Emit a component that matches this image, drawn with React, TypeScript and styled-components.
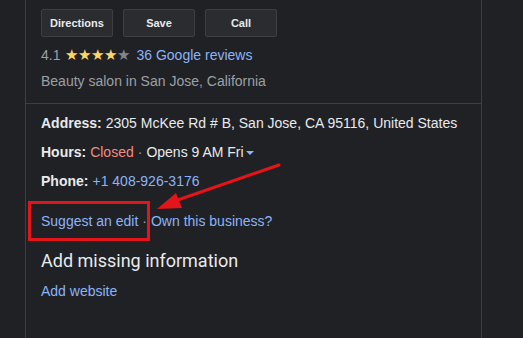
import React from "react";
import styled, { createGlobalStyle } from "styled-components";

const Global = createGlobalStyle`
  html, body { margin: 0; padding: 0; background: #202124; }
  body { width: 523px; height: 338px; overflow: hidden; font-family: "Liberation Sans", Arial, sans-serif; }
`;

const Page = styled.div`
  position: relative;
  width: 523px;
  height: 338px;
  background: #202124;
  display: flex;
`;

const Gutter = styled.div`
  width: 25px;
  flex: none;
`;

const Panel = styled.div`
  width: 455px;
  flex: none;
  border-left: 1px solid #3c4043;
  border-right: 1px solid #3c4043;
  display: flex;
  flex-direction: column;
`;

const Top = styled.div`
  padding: 9px 15px 0 15px;
  display: flex;
  flex-direction: column;
  border-bottom: 1px solid #3c4043;
  height: 94px;
`;

const Buttons = styled.div`
  display: flex;
  gap: 10px;
`;

const Button = styled.div`
  width: 70px;
  height: 26px;
  border: 1px solid #3c4043;
  border-radius: 2px;
  background: #2b2c2f;
  color: #e8eaed;
  font-size: 11px;
  font-weight: bold;
  display: flex;
  align-items: center;
  justify-content: center;
`;

const Line = styled.div<{ $mt?: number; $color?: string }>`
  margin-top: ${(p) => p.$mt ?? 0}px;
  font-size: 14px;
  line-height: 18px;
  color: ${(p) => p.$color ?? "#e8eaed"};
  display: flex;
  align-items: center;
  white-space: nowrap;
`;

const Stars = styled.span`
  display: inline-flex;
  margin: 0 6px 0 5px;
`;

const Star = styled.span<{ $on: boolean }>`
  color: ${(p) => (p.$on ? "#fdd663" : "#80868b")};
  font-size: 15px;
  line-height: 18px;
  width: 13px;
  text-align: center;
`;

const Link = styled.span`
  color: #8ab4f8;
`;

const Body = styled.div`
  padding: 6px 15px 0 15px;
  display: flex;
  flex-direction: column;
`;

const Label = styled.b`
  font-weight: bold;
  margin-right: 4px;
`;

const Closed = styled.span`
  color: #f28b82;
`;

const Sep = styled.span`
  color: #9aa0a6;
  margin: 0 4px;
`;

const Caret = styled.span`
  width: 0;
  height: 0;
  border-left: 4px solid transparent;
  border-right: 4px solid transparent;
  border-top: 4px solid #8ab4f8;
  margin-left: 2px;
  margin-top: 1px;
`;

const Heading = styled.div`
  margin-top: 20px;
  font-size: 18px;
  line-height: 22px;
  color: #e8eaed;
  font-family: Roboto, "Liberation Sans", Arial, sans-serif;
`;

const Overlay = styled.svg`
  position: absolute;
  left: 0;
  top: 0;
  pointer-events: none;
`;

export default function App() {
  return (
    <>
      <Global />
      <Page>
        <Gutter />
        <Panel>
          <Top>
            <Buttons>
              <Button>Directions</Button>
              <Button>Save</Button>
              <Button>Call</Button>
            </Buttons>
            <Line $mt={9} $color="#9aa0a6">
              4.1
              <Stars>
                {[1, 2, 3, 4, 5].map((i) => (
                  <Star key={i} $on={i <= 4}>★</Star>
                ))}
              </Stars>
              <Link>36 Google reviews</Link>
            </Line>
            <Line $mt={8} $color="#9aa0a6">Beauty salon in San Jose, California</Line>
          </Top>
          <Body>
            <Line $mt={4}>
              <Label>Address:</Label>2305 McKee Rd # B, San Jose, CA 95116, United States
            </Line>
            <Line $mt={11}>
              <Label>Hours:</Label>
              <Closed>Closed</Closed>
              <Sep>·</Sep>Opens 9 AM Fri<Caret />
            </Line>
            <Line $mt={11}>
              <Label>Phone:</Label>
              <Link>+1 408-926-3176</Link>
            </Line>
            <Line $mt={22}>
              <Link>Suggest an edit</Link>
              <Sep>·</Sep>
              <Link>Own this business?</Link>
            </Line>
            <Heading>Add missing information</Heading>
            <Line $mt={10}>
              <Link>Add website</Link>
            </Line>
          </Body>
        </Panel>
      </Page>
      <Overlay width={523} height={338} viewBox="0 0 523 338">
        <rect x={29.5} y={202.5} width={119} height={37} fill="none" stroke="#e4141b" strokeWidth={3} />
        <line x1={279} y1={165} x2={172} y2={202} stroke="#e4141b" strokeWidth={3} strokeLinecap="round" />
        <polygon points="157,209 176,193 182,208" fill="#e4141b" />
      </Overlay>
    </>
  );
}
